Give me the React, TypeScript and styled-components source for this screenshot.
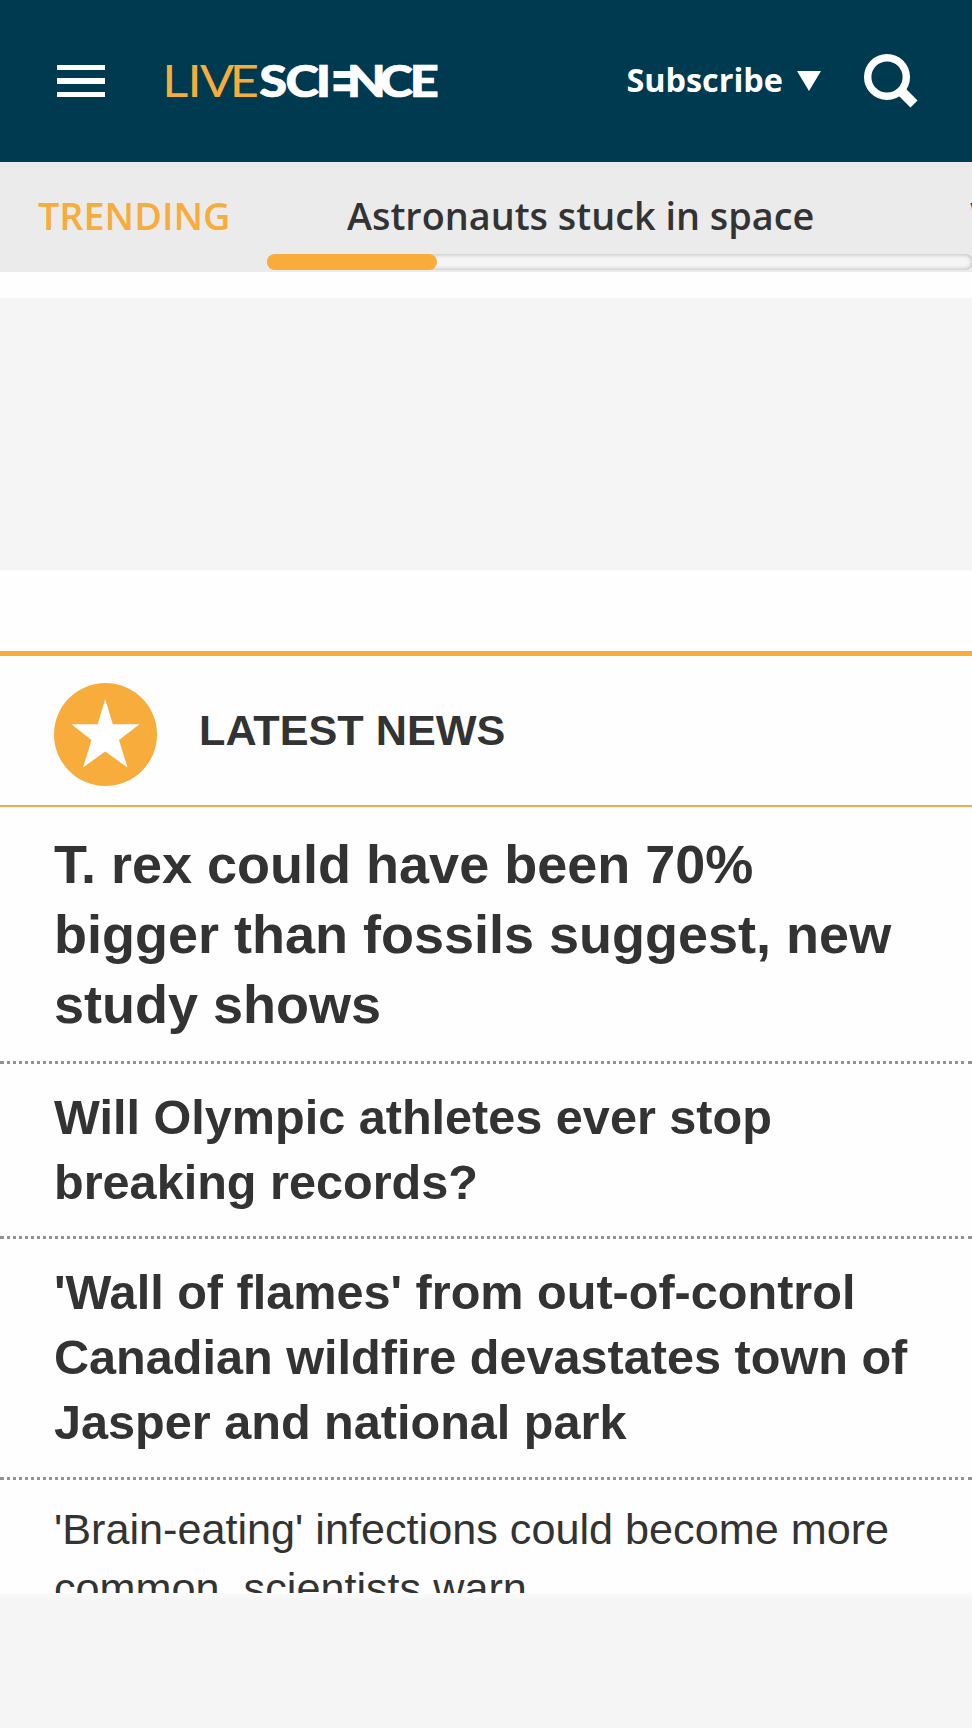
import React from "react";
import styled, { createGlobalStyle } from "styled-components";

const colors = {
  navy: "#003a51",
  orange: "#f8ac3c",
  ink: "#333333",
  panel: "#f5f5f5",
  trend: "#ebebeb",
};

const GlobalStyle = createGlobalStyle`
  * { box-sizing: border-box; }
  html, body { margin: 0; padding: 0; background: #fefefe; overflow: hidden; }
  button { font: inherit; color: inherit; background: none; border: 0; padding: 0; }
`;

const Page = styled.div`
  width: 972px;
  height: 1728px;
  display: flex;
  flex-direction: column;
  overflow: hidden;
  color: ${colors.ink};
  font-family: "Liberation Sans", Arial, sans-serif;
`;

const Header = styled.header`
  flex: none;
  height: 162px;
  padding: 0 54px 0 56.5px;
  display: flex;
  align-items: center;
  background: ${colors.navy};
  color: #fff;
`;

const MenuButton = styled.button`
  width: 48.5px;
  height: 33px;
  display: flex;
  flex-direction: column;
  justify-content: space-between;
`;

const MenuBar = styled.span`
  height: 5.4px;
  background: #fff;
`;

const LogoLink = styled.a`
  display: flex;
  margin-left: 55px;
`;

const Subscribe = styled.button`
  margin-left: auto;
  display: flex;
  align-items: center;
  gap: 14px;
  font: 700 32.4px/44px "Open Sans", "Noto Sans", sans-serif;
`;

const SubscribeLabel = styled.span`
  padding-bottom: 4px;
`;

const SearchButton = styled.button`
  display: flex;
  margin-left: 43px;
`;

const Trending = styled.nav`
  flex: none;
  height: 110px;
  display: flex;
  overflow: hidden;
  background: ${colors.trend};
  font: 600 37.8px/52px "Open Sans", "Noto Sans", sans-serif;
`;

const TrendingLabel = styled.div`
  flex: none;
  width: 267px;
  padding: 27.5px 0 0 38px;
  color: ${colors.orange};
`;

const TrendingScroller = styled.div`
  flex: none;
  width: 706px;
  display: flex;
  flex-direction: column;
  justify-content: space-between;
  padding: 27.5px 0 2px;
`;

const TrendingList = styled.div`
  display: flex;
  gap: 156px;
  padding-left: 80px;
  white-space: nowrap;
  overflow: hidden;
`;

const Track = styled.div`
  height: 16px;
  border-radius: 8px;
  background: #f5f5f5;
  box-shadow: inset 0 0 5px rgba(0, 0, 0, 0.3);
`;

const Thumb = styled.div`
  width: 170px;
  height: 16px;
  border-radius: 8px;
  background: ${colors.orange};
`;

const AdSlot = styled.div`
  flex: none;
  height: 272px;
  margin: 26px 0 81px;
  background: ${colors.panel};
`;

const News = styled.section`
  flex: none;
  height: 942px;
  overflow: hidden;
  border-top: 5px solid ${colors.orange};
`;

const NewsHeader = styled.header`
  height: 151px;
  display: flex;
  align-items: center;
  gap: 42px;
  padding: 8px 54px 0;
  border-bottom: 2px solid #f0ad50;
`;

const NewsTitle = styled.h2`
  margin: 0 0 9px;
  font-size: 43.2px;
  line-height: 56px;
  font-weight: 700;
`;

const sizes = {
  large: { size: 54, line: 70.2, weight: 700, pad: "22px 54px 21.4px" },
  medium: { size: 48.6, line: 65, weight: 700, pad: "21px 54px 21.3px" },
  small: { size: 43.2, line: 58.5, weight: 400, pad: "20.5px 54px" },
};

const Story = styled.h3<{ $kind: keyof typeof sizes }>`
  margin: 0;
  padding: ${(p) => sizes[p.$kind].pad};
  border-bottom: 3px dotted #929292;
  font-size: ${(p) => sizes[p.$kind].size}px;
  line-height: ${(p) => sizes[p.$kind].line}px;
  font-weight: ${(p) => sizes[p.$kind].weight};
`;

const StoryLine = styled.span`
  display: block;
  white-space: nowrap;
`;

const BottomSlot = styled.footer`
  flex: 1;
  background: linear-gradient(#fbfbfb, ${colors.panel} 8px);
`;

const LogoThin = styled.text`
  font: 400 44px Lato, sans-serif;
  fill: ${colors.orange};
`;

const LogoHeavy = styled.text`
  font: 900 44px Lato, sans-serif;
  fill: #fff;
  stroke: #fff;
  stroke-width: 0.7px;
`;

const Logo = () => (
  <svg width="290" height="72" viewBox="160 45 290 72" role="img" aria-label="Live Science">
    <g transform="scale(1.15 1)">
      <LogoThin x="141 163.1 173.9 199.8" y="97">LIVE</LogoThin>
      <LogoHeavy x="225.5 248.3 274.6" y="97">SCI</LogoHeavy>
      <LogoHeavy x="301.5 330 356.4" y="97">NCE</LogoHeavy>
    </g>
    <rect x="333.5" y="71" width="19" height="7" fill="#fff" />
    <rect x="333.5" y="84.3" width="19" height="7" fill="#fff" />
  </svg>
);

const stories: { kind: keyof typeof sizes; lines: string[] }[] = [
  { kind: "large", lines: ["T. rex could have been 70%", "bigger than fossils suggest, new", "study shows"] },
  { kind: "medium", lines: ["Will Olympic athletes ever stop", "breaking records?"] },
  {
    kind: "medium",
    lines: ["'Wall of flames' from out-of-control", "Canadian wildfire devastates town of", "Jasper and national park"],
  },
  { kind: "small", lines: ["'Brain-eating' infections could become more", "common, scientists warn"] },
];

export default function App() {
  return (
    <Page>
      <GlobalStyle />
      <Header>
        <MenuButton aria-label="Menu">
          <MenuBar />
          <MenuBar />
          <MenuBar />
        </MenuButton>
        <LogoLink>
          <Logo />
        </LogoLink>
        <Subscribe>
          <SubscribeLabel>Subscribe</SubscribeLabel>
          <svg width="24" height="20" viewBox="0 0 24 20">
            <path d="M0 0H24L12 20Z" fill="#fff" />
          </svg>
        </Subscribe>
        <SearchButton aria-label="Search">
          <svg width="54" height="54" viewBox="0 0 54 54" fill="none" stroke="#fff">
            <circle cx="23" cy="23" r="19.3" strokeWidth="7.4" />
            <path d="M36.5 36.5L50 50" strokeWidth="10" />
          </svg>
        </SearchButton>
      </Header>
      <Trending>
        <TrendingLabel>TRENDING</TrendingLabel>
        <TrendingScroller>
          <TrendingList>
            <span>Astronauts stuck in space</span>
            <span>What</span>
          </TrendingList>
          <Track>
            <Thumb />
          </Track>
        </TrendingScroller>
      </Trending>
      <AdSlot />
      <News>
        <NewsHeader>
          <svg width="103" height="103" viewBox="0 0 103 103">
            <circle cx="51.5" cy="51.5" r="51.5" fill={colors.orange} />
            <path
              d="M51.2 16L58.8 41.2H85.5L65 57L73.5 84.5L51.2 68.5L29 84.5L37.5 57L17.5 41.2H43.7Z"
              fill="#fff"
            />
          </svg>
          <NewsTitle>LATEST NEWS</NewsTitle>
        </NewsHeader>
        {stories.map((story) => (
          <Story key={story.lines[0]} $kind={story.kind}>
            {story.lines.map((line) => (
              <StoryLine key={line}>{line}</StoryLine>
            ))}
          </Story>
        ))}
      </News>
      <BottomSlot />
    </Page>
  );
}
